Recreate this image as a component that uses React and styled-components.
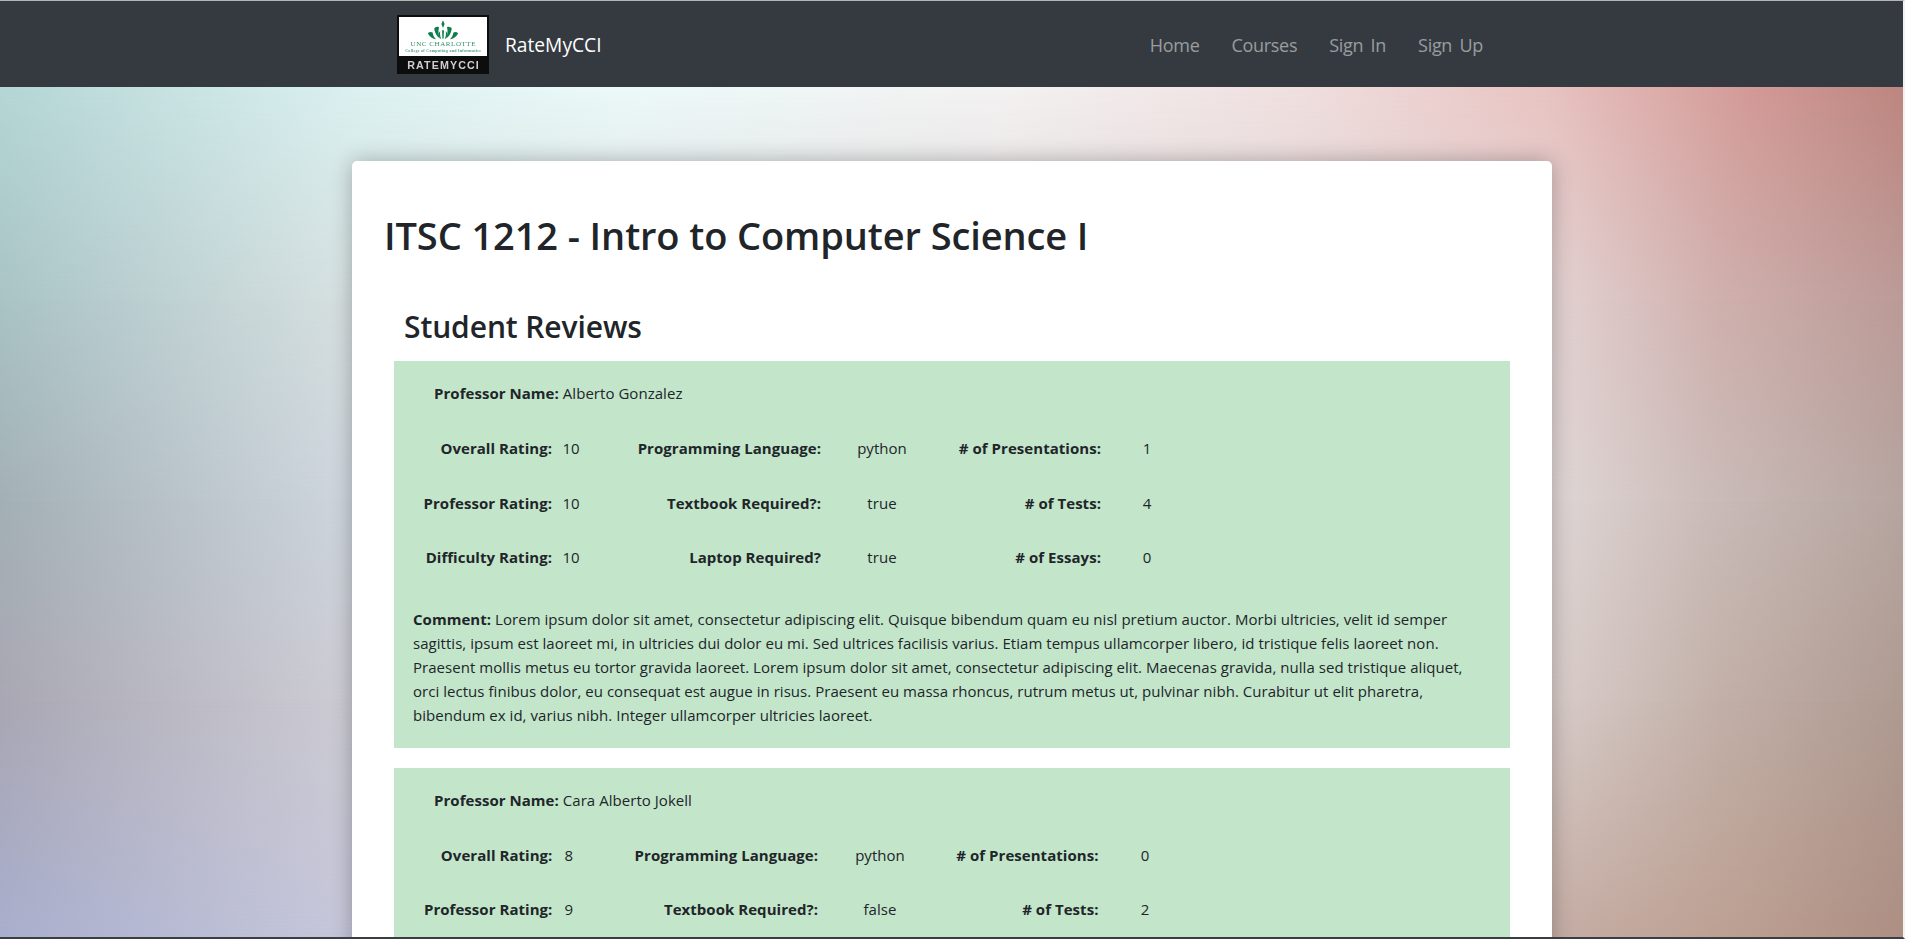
import React from 'react'
import styled, { createGlobalStyle } from 'styled-components'

const GlobalStyle = createGlobalStyle`
   html, body {
      margin: 0;
      padding: 0;
      height: 100%;
      overflow: hidden;
   }

   body {
      font-family: 'Open Sans', 'Noto Sans', sans-serif;
      font-size: 15px;
      line-height: 24px;
      color: #212529;
   }
`

const Page = styled.div`
   position: relative;
   height: 939px;
   overflow: hidden;
   border-top: 1px solid #b4b4b4;
   border-right: 2px solid #f2f2f2;
   border-bottom: 2px solid #3a3d42;
   box-sizing: border-box;
   display: flex;
   flex-direction: column;
`

// the blurred photo behind the page, built from horizontal bands faded into each other
const Backdrop = styled.div`
   position: absolute;
   inset: 0;
   background: linear-gradient(to right, ${props => props.$stops});
   ${props => props.$from !== undefined && `
      mask-image: linear-gradient(to bottom, transparent ${props.$from}px, #000 ${props.$to}px);
   `}
`

const Navbar = styled.nav`
   position: relative;
   flex: none;
   height: 86px;
   background: #343a40;
   display: flex;
   align-items: center;
   padding-left: 397px;
   padding-right: 420px;
`

const Brand = styled.a`
   display: flex;
   align-items: center;
   gap: 16px;
   font-size: 19.2px;
   color: #fff;
`

const BrandName = styled.span`
   padding-top: 2px;
`

const NavLinks = styled.div`
   margin-left: auto;
   padding-top: 1px;
   display: flex;
   gap: 32px;
`

const NavLink = styled.a`
   font-size: 18px;
   color: rgba(255, 255, 255, 0.5);
   letter-spacing: -0.3px;
   word-spacing: 3px;
`

const Card = styled.main`
   position: relative;
   flex: none;
   box-sizing: border-box;
   width: 1200px;
   margin: 74px 0 0 352px;
   padding: 50px 42px 0 32px;
   background: #fff;
   border-radius: 5px;
   box-shadow: 0 0 22px rgba(0, 0, 0, 0.28);
`

const Title = styled.h1`
   margin: 0;
   font-size: 38px;
   line-height: 48px;
   font-weight: 600;
   letter-spacing: -0.1px;
`

const SubTitle = styled.h2`
   margin: 49px 0 0 20px;
   font-size: 30px;
   line-height: 38px;
   font-weight: 600;
   letter-spacing: -0.1px;
`

const Review = styled.section`
   margin: 15px 0 0 10px;
   padding: 5px 0 21px;
   background: #c3e6cb;
   letter-spacing: 0.04px;

   & + & {
      margin-top: 20px;
   }
`

const ProfessorRow = styled.div`
   height: 54.7px;
   padding-left: 40px;
   display: flex;
   align-items: center;
   gap: 4px;
`

const RatingRow = styled.div`
   height: 54.7px;
   display: grid;
   grid-template-columns: ${props => props.$cols};
   align-items: center;
`

const Label = styled.span`
   font-weight: 700;
   text-align: right;
`

const Value = styled.span`
   text-align: ${props => props.$left ? 'left' : 'center'};
   padding-left: ${props => props.$left ? props.$inset : 0}px;
`

const Comment = styled.p`
   margin: 22px 21px 0 19px;
`

const Strong = styled.strong`
   font-weight: 700;
`

const Logo = () => (
   <svg width="92" height="59" viewBox="0 0 92 59">
      <defs>
         <filter id="soft">
            <feGaussianBlur stdDeviation="0.25" />
         </filter>
      </defs>
      <g filter="url(#soft)">
         <rect width="92" height="59" fill="#111" />
         <rect x="2" y="2" width="88" height="39" fill="#fff" />
         <g fill="#0f7f4f" transform="translate(46 5.300) scale(0.8 1.520) translate(-46 -6)">
            <path d="M46 6l2 2.500-2 2.500-2-2.500z" />
            <path d="M44.800 12.500h2.400l-.4 5.500h-1.600z" />
            <path d="M42.500 13c-.5 2 0 4 1.500 5.500-2-.5-3.500-2-3.500-4z" />
            <path d="M49.500 13c.5 2 0 4-1.500 5.500 2-.5 3.500-2 3.500-4z" />
            <path d="M41 10.500c-2.500-.5-5 0-6 1 1 3 3.500 5.500 7.500 6.500-2-2-3-4.500-1.500-7.500z" />
            <path d="M51 10.500c2.500-.5 5 0 6 1-1 3-3.500 5.500-7.500 6.500 2-2 3-4.500 1.500-7.500z" />
            <path d="M33 14c-2-.5-4-.5-6 .5 2.500 2.500 6 3.800 10.500 4-2.500-1-3.800-2.500-4.500-4.500z" />
            <path d="M59 14c2-.5 4-.5 6 .5-2.500 2.500-6 3.800-10.500 4 2.500-1 3.800-2.500 4.500-4.500z" />
         </g>
         <text x="46" y="31" textAnchor="middle" textLength="65" fontFamily="'Liberation Serif', serif" fontSize="7" fill="#2f8f68">UNC CHARLOTTE</text>
         <text x="46" y="36.700" textAnchor="middle" textLength="75.600" fontFamily="'Liberation Serif', serif" fontSize="4" fontWeight="700" fill="#4f9f7f">College of Computing and Informatics</text>
         <text x="46" y="54" textAnchor="middle" textLength="71.700" fontFamily="'Liberation Sans', sans-serif" fontSize="10.700" fontWeight="700" fill="#cfcfcf">RATEMYCCI</text>
      </g>
   </svg>
)

const lorem = 'Lorem ipsum dolor sit amet, consectetur adipiscing elit. Quisque bibendum quam eu nisl pretium auctor. Morbi ultricies, velit id semper sagittis, ipsum est laoreet mi, in ultricies dui dolor eu mi. Sed ultrices facilisis varius. Etiam tempus ullamcorper libero, id tristique felis laoreet non. Praesent mollis metus eu tortor gravida laoreet. Lorem ipsum dolor sit amet, consectetur adipiscing elit. Maecenas gravida, nulla sed tristique aliquet, orci lectus finibus dolor, eu consequat est augue in risus. Praesent eu massa rhoncus, rutrum metus ut, pulvinar nibh. Curabitur ut elit pharetra, bibendum ex id, varius nibh. Integer ullamcorper ultricies laoreet.'

const reviews = [
   {
      professor: 'Alberto Gonzalez',
      cols: '158px 40px 229px 122px 158px 92px',
      inset: 10.5,
      rows: [
         ['Overall Rating:', '10', 'Programming Language:', 'python', '# of Presentations:', '1'],
         ['Professor Rating:', '10', 'Textbook Required?:', 'true', '# of Tests:', '4'],
         ['Difficulty Rating:', '10', 'Laptop Required?', 'true', '# of Essays:', '0'],
      ],
      comment: lorem,
   },
   {
      professor: 'Cara Alberto Jokell',
      cols: '158.400px 40px 225.600px 124px 156.500px 93px',
      inset: 12,
      rows: [
         ['Overall Rating:', '8', 'Programming Language:', 'python', '# of Presentations:', '0'],
         ['Professor Rating:', '9', 'Textbook Required?:', 'false', '# of Tests:', '2'],
      ],
   },
]

const topBand = '#b4d6d4 0, #dcf1f1 360px, #ecf9f9 620px, #f4f2f2 1000px, #f0dfdf 1300px, #e8c4c2 1545px, #d39a97 1750px, #bd8680 1905px'
const upperBand = '#a9c3c5 0, #d5dfe0 340px, #e3d2d2 1552px, #cfb0ad 1720px, #bb9a97 1905px'
const middleBand = '#a3b0b5 0, #cdd5dc 340px, #dfd6d5 1552px, #ccbdba 1700px, #b5a49f 1905px'
const lowerBand = '#a9a7b3 0, #cccbd3 340px, #d8ccc9 1552px, #c2b0a8 1720px, #ae9a91 1905px'
const bottomBand = '#a9aecd 0, #c5c6da 340px, #c5ada4 1552px, #bb9e90 1750px, #ad8e83 1905px'

const App = () => (
   <Page>
      <GlobalStyle />
      <Backdrop $stops={topBand} />
      <Backdrop $stops={upperBand} $from={87} $to={300} />
      <Backdrop $stops={middleBand} $from={300} $to={500} />
      <Backdrop $stops={lowerBand} $from={500} $to={700} />
      <Backdrop $stops={bottomBand} $from={700} $to={937} />

      <Navbar>
         <Brand>
            <Logo />
            <BrandName>RateMyCCI</BrandName>
         </Brand>
         <NavLinks>
            <NavLink>Home</NavLink>
            <NavLink>Courses</NavLink>
            <NavLink>Sign In</NavLink>
            <NavLink>Sign Up</NavLink>
         </NavLinks>
      </Navbar>

      <Card>
         <Title>ITSC 1212 - Intro to Computer Science I</Title>
         <SubTitle>Student Reviews</SubTitle>
         {reviews.map(review => (
            <Review key={review.professor}>
               <ProfessorRow>
                  <Strong>Professor Name:</Strong>
                  <span>{review.professor}</span>
               </ProfessorRow>
               {review.rows.map(row => (
                  <RatingRow key={row[0]} $cols={review.cols}>
                     <Label>{row[0]}</Label>
                     <Value $left $inset={review.inset}>{row[1]}</Value>
                     <Label>{row[2]}</Label>
                     <Value>{row[3]}</Value>
                     <Label>{row[4]}</Label>
                     <Value>{row[5]}</Value>
                  </RatingRow>
               ))}
               {review.comment && (
                  <Comment><Strong>Comment:</Strong> {review.comment}</Comment>
               )}
            </Review>
         ))}
      </Card>
   </Page>
)

export default App
